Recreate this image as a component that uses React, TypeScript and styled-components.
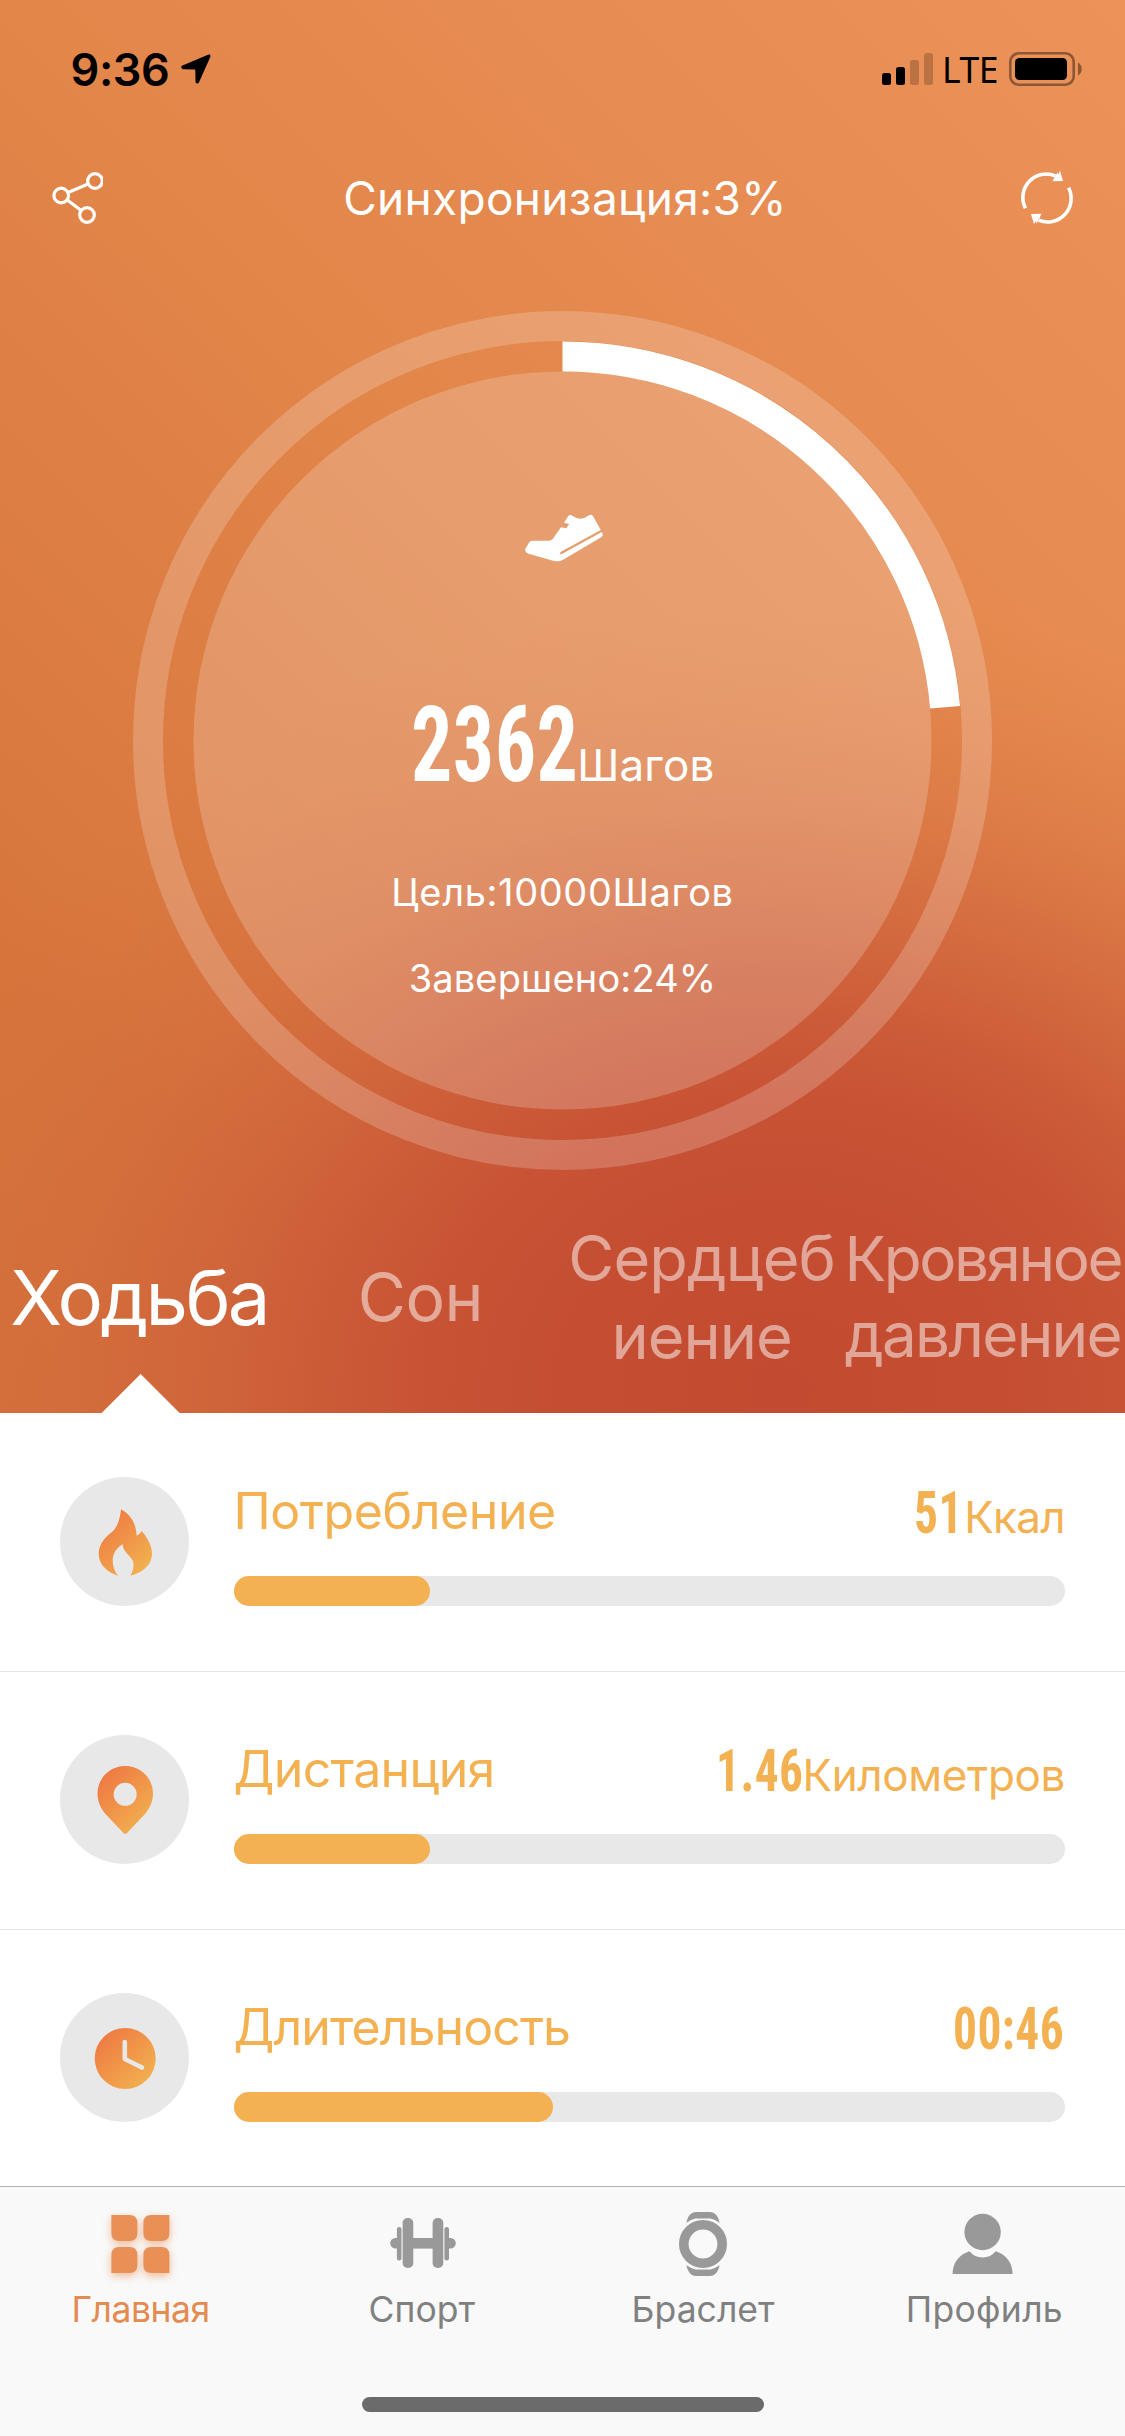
import React from "react";
import styled, { createGlobalStyle } from "styled-components";

const GlobalStyle = createGlobalStyle`
  * { box-sizing: border-box; }
  body { margin: 0; background: #fff; }
`;

const Screen = styled.main`
  display: flex;
  flex-direction: column;
  width: 1125px;
  height: 2436px;
  overflow: hidden;
  background: #fff;
  font-family: Inter, "Noto Sans", sans-serif;
`;

/* ---------- hero ---------- */

const Hero = styled.section`
  display: flex;
  flex-direction: column;
  flex: none;
  height: 1413px;
  color: #fff;
  background:
    radial-gradient(
      ellipse 950px 790px at 780px 1390px,
      #c24a30 0,
      #c44d32 20%,
      #c75234 36%,
      rgba(202, 88, 55, 0.9) 48%,
      rgba(205, 94, 57, 0.65) 61%,
      rgba(209, 100, 60, 0.34) 75%,
      rgba(212, 108, 62, 0.12) 89%,
      rgba(214, 112, 62, 0) 100%
    ),
    linear-gradient(45deg, #d4713b 0%, #d6743c 18%, #db7b41 30%, #e2864a 56%, #e68b51 73%, #ec9359 100%);
`;

const StatusBar = styled.header`
  display: flex;
  align-items: center;
  justify-content: space-between;
  height: 132px;
  padding: 6px 43px 0 70.5px;
  color: #000;
`;

const StatusSide = styled.div`
  display: flex;
  align-items: center;
`;

const Clock = styled.span`
  width: 110px;
  font-size: 45px;
  font-weight: 600;
  line-height: 45px;
  letter-spacing: -0.4px;
`;

const Network = styled.span`
  width: 67px;
  margin-left: 9px;
  font-family: "Noto Sans", sans-serif;
  font-size: 35.5px;
  line-height: 45px;
  letter-spacing: -0.4px;
`;

const NavBar = styled.nav`
  display: flex;
  align-items: center;
  height: 132px;
  padding: 0 50px 0 51px;
`;

const NavTitle = styled.h1`
  flex: 1;
  margin: 0;
  padding-left: 8px;
  font-size: 46px;
  font-weight: 400;
  line-height: 60px;
  letter-spacing: 0.3px;
  text-align: center;
`;

const Dial = styled.div`
  position: relative;
  display: flex;
  flex-direction: column;
  align-items: center;
  align-self: center;
  width: 859px;
  height: 859px;
  margin-top: 47px;
  padding-top: 203px;
`;

const DialRings = styled.svg`
  position: absolute;
  inset: 0;
`;

const DialContent = styled.div`
  position: relative;
  display: flex;
  flex-direction: column;
  align-items: center;
`;

const StepsLine = styled.div`
  display: flex;
  align-items: baseline;
  margin-top: 131px;
`;

const Condensed = styled.span<{ $size: number; $width: number; $squeeze: number }>`
  display: inline-block;
  width: ${(p) => p.$width}px;
  font-family: Roboto, sans-serif;
  font-size: ${(p) => p.$size}px;
  font-weight: 750;
  font-stretch: 75%;
  line-height: ${(p) => p.$size}px;
  letter-spacing: 0.6px;
  white-space: nowrap;
  transform: scaleX(${(p) => p.$squeeze});
  transform-origin: left center;
`;

const StepsUnit = styled.span`
  font-size: 44px;
  line-height: 44px;
  letter-spacing: 0.1px;
`;

const DialNote = styled.p<{ $top: number; $tracking: number }>`
  margin: ${(p) => p.$top}px 0 0;
  font-size: 38px;
  line-height: 40px;
  letter-spacing: ${(p) => p.$tracking}px;
`;

const MetricTabs = styled.div`
  display: grid;
  grid-template-columns: repeat(4, 1fr);
  height: 234px;
  margin-top: auto;
`;

const MetricTab = styled.div<{ $active?: boolean; $size: number; $line: number }>`
  position: relative;
  display: flex;
  flex-direction: column;
  align-items: center;
  justify-content: center;
  padding: 1px 3px 0 0;
  color: ${(p) => (p.$active ? "#fff" : "rgba(255, 255, 255, 0.5)")};
  font-size: ${(p) => p.$size}px;
  line-height: ${(p) => p.$line}px;
  white-space: nowrap;
`;

const TabLine = styled.span<{ $tracking: number }>`
  letter-spacing: ${(p) => p.$tracking}px;
`;

const ActivePointer = styled.i`
  position: absolute;
  bottom: 0;
  left: 50%;
  width: 78px;
  height: 39px;
  margin-left: -39px;
  background: #fff;
  clip-path: polygon(50% 0, 100% 100%, 0 100%);
`;

/* ---------- metrics ---------- */

const MetricList = styled.section`
  flex: none;
  height: 773px;
  overflow: hidden;
`;

const MetricRow = styled.article`
  display: flex;
  height: 258px;
  padding: 64px 60px 0;

  & + & {
    padding-top: 63px;
    border-top: 1px solid #e6e6e6;
  }
`;

const Badge = styled.div`
  flex: none;
  width: 129px;
  height: 129px;
  border-radius: 50%;
  background: #e8e8e8;
`;

const MetricBody = styled.div`
  flex: 1;
  margin-left: 45px;
  color: #f3b152;
`;

const MetricHead = styled.div`
  display: flex;
  justify-content: space-between;
  align-items: flex-start;
  height: 99px;
`;

const MetricName = styled.h2<{ $tracking: number }>`
  margin: 9px 0 0 -0.5px;
  font-size: 50px;
  font-weight: 400;
  line-height: 50px;
  letter-spacing: ${(p) => p.$tracking}px;
`;

const MetricValue = styled.div`
  display: flex;
  align-items: baseline;
  margin-top: 6px;
`;

const MetricUnit = styled.span<{ $tracking: number }>`
  font-size: 44px;
  line-height: 44px;
  letter-spacing: ${(p) => p.$tracking}px;
`;

const Track = styled.div`
  height: 30px;
  border-radius: 15px;
  background: #e8e8e8;
`;

const Fill = styled.div`
  height: 100%;
  border-radius: 15px;
  background: #f3b152;
`;

/* ---------- bottom bar ---------- */

const BottomBar = styled.footer`
  display: flex;
  flex: 1;
  flex-direction: column;
  align-items: center;
  border-top: 1px solid #b2b2b2;
  background: #f9f9f9;
`;

const BottomTabs = styled.div`
  display: grid;
  grid-template-columns: repeat(4, 1fr);
  width: 100%;
  padding-top: 22px;
`;

const BottomTab = styled.div<{ $active?: boolean; $tracking: number }>`
  display: flex;
  flex-direction: column;
  align-items: center;
  gap: 11px;
  color: ${(p) => (p.$active ? "#e38b50" : "#808080")};
  font-size: 35.5px;
  line-height: 40px;
  letter-spacing: ${(p) => p.$tracking}px;
`;

const TabIcon = styled.svg`
  width: 70px;
  height: 70px;
  overflow: visible;
`;

const GlowIcon = styled(TabIcon)`
  filter: drop-shadow(0 3px 4px rgba(232, 144, 86, 0.6));
`;

const HomeIndicator = styled.div`
  width: 402px;
  height: 15px;
  margin-top: 67px;
  border-radius: 8px;
  background: #6b6b6b;
`;

/* ---------- drawings ---------- */

const WarmGradient = ({ id }: { id: string }) => (
  <defs>
    <linearGradient id={id} gradientUnits="userSpaceOnUse" x1="42" y1="42" x2="88" y2="88">
      <stop offset="0" stopColor="#ee7a43" />
      <stop offset="1" stopColor="#f2b04f" />
    </linearGradient>
  </defs>
);

const FlameIcon = () => (
  <svg width="129" height="129" viewBox="0 0 129 129">
    <WarmGradient id="flame" />
    <path
      fill="url(#flame)"
      d="M61 32.3C70 37 76.3 46 76.6 58.7C79 57.8 80.8 56 81.6 54C87.5 60.5 92 68.5 92 77C92 87.500 83 95.500 70.500 98.700C73.300 94 74 89 73.200 84.700C72 79.500 62.500 75 62.800 67.300C56.500 70.500 52.700 77 52.700 83.500C52.700 89.500 54.500 94.500 58.200 98.700C47.500 95.500 38.700 87.500 38.700 77C38.700 66.500 46 59.500 52.500 54.500C58.500 49 60.500 38.500 61 32.300Z"
    />
  </svg>
);

const PinIcon = () => (
  <svg width="129" height="129" viewBox="0 0 129 129">
    <WarmGradient id="pin" />
    <path
      fill="url(#pin)"
      fillRule="evenodd"
      d="M65.200 31C80.700 31 93 43.300 93 58.500C93 66 90 73 85.500 78.500L67 98C66 99.200 64.500 99.200 63.500 98L45 78.500C40.500 73 37.500 66 37.500 58.500C37.500 43.300 49.800 31 65.200 31ZM65.200 47.800A11.500 11.500 0 1 0 65.200 70.800A11.500 11.500 0 1 0 65.200 47.800Z"
    />
  </svg>
);

const ClockIcon = () => (
  <svg width="129" height="129" viewBox="0 0 129 129">
    <WarmGradient id="clock" />
    <circle cx="65.200" cy="65.500" r="30.500" fill="url(#clock)" />
    <path d="M64.800 49V66L82 74.500" fill="none" stroke="#e8e8e8" strokeWidth="4.600" strokeLinecap="round" strokeLinejoin="round" />
  </svg>
);

const ShareIcon = () => (
  <svg width="52" height="52" viewBox="0 0 52 52" fill="none" stroke="#fff" strokeWidth="3.200">
    <circle cx="10.200" cy="23.500" r="7.300" />
    <circle cx="44" cy="9" r="7.300" />
    <circle cx="36" cy="43" r="7.300" />
    <path d="M17.100 20.500L37.100 12M16.300 28L29.900 38.200" />
  </svg>
);

const SyncIcon = () => (
  <svg width="56" height="56" viewBox="0 0 56 56" fill="none" stroke="#fff" strokeWidth="3.600">
    <path d="M6.400 38.200A23.500 23.500 0 0 1 36.500 5.900" />
    <path d="M49.600 17.800A23.500 23.500 0 0 1 19.500 50.100" />
    <path d="M41 0.700L44 11L33 11.300L37.600 8Z" fill="#fff" stroke="none" />
    <path d="M15 54.300L12 44L23 43.700L18.400 48Z" fill="#fff" stroke="none" />
    <path d="M38.500 2.500L41.500 10H34Z M17.500 53.500L14.500 45H22Z" fill="#fff" stroke="none" />
  </svg>
);

const LocationArrow = () => (
  <svg width="30" height="30" viewBox="0 0 30 30">
    <path
      d="M1.500 11.500L27 0.700C28.700 0 30 1.300 29.300 3L18 28.200C17.100 30.100 14.500 29.600 14.500 27.500L14.300 16.300C14.300 15.700 14.100 15.500 13.500 15.500L2.300 15.300C0.100 15.200 -0.500 12.400 1.500 11.500Z"
      fill="#000"
    />
  </svg>
);

const SignalBars = () => (
  <svg width="51" height="32" viewBox="0 0 51 32">
    <rect x="0" y="20" width="9" height="12" rx="2.500" />
    <rect x="14" y="14" width="9" height="18" rx="2.500" />
    <rect x="28" y="7" width="9" height="25" rx="2.500" opacity="0.200" />
    <rect x="42" y="0" width="9" height="32" rx="2.500" opacity="0.200" />
  </svg>
);

const Battery = () => (
  <svg width="73" height="34" viewBox="0 0 73 34">
    <rect x="1.300" y="1.300" width="63.400" height="31.400" rx="8.500" fill="none" stroke="#000" strokeWidth="2.600" opacity="0.400" />
    <rect x="6" y="6" width="52" height="22" rx="4.500" />
    <path d="M69 10.500C74 13 74 21 69 23.500Z" opacity="0.400" />
  </svg>
);

const ShoeIcon = () => (
  <svg width="78" height="48" viewBox="-1 0 78 46" preserveAspectRatio="none" overflow="visible">
    <path
      fill="#fff"
      d="M4 27.500Q5 25.700 7.500 25.700H24Q26.300 25.700 27.700 24L36 12.700L41.300 13.700L44.200 9.600L39 8.300L43 2.500Q44.500 0.300 46.800 1.500Q55.500 7.500 63.800 1.500Q66.300 -0.500 68 2L75.800 15.300L36.300 35.900Q34.200 37.200 35.300 38.400Q36 39 37.800 37.900L76.800 17.200Q78.800 20.200 76.500 22L38.500 43.500Q34 46.200 29 45L3.500 38Q-1.200 36.200 0.500 33Z"
    />
  </svg>
);

const HomeTabIcon = () => (
  <GlowIcon viewBox="0 0 70 70" fill="#e89056">
    <path d="M5.400 6H23.400Q31.400 6 31.400 14V24Q31.400 32 23.400 32H13.400Q5.400 32 5.400 24Z" />
    <path d="M63.400 6V24Q63.400 32 55.400 32H45.400Q37.400 32 37.400 24V14Q37.400 6 45.400 6Z" />
    <path d="M5.400 64V46Q5.400 38 13.400 38H23.400Q31.400 38 31.400 46V56Q31.400 64 23.400 64Z" />
    <path d="M63.400 64H45.400Q37.400 64 37.400 56V46Q37.400 38 45.400 38H55.400Q63.400 38 63.400 46Z" />
  </GlowIcon>
);

const DumbbellIcon = () => (
  <TabIcon viewBox="0 0 70 70" fill="#999">
    <rect x="15.600" y="9" width="10.700" height="50" rx="5" />
    <rect x="45.600" y="9" width="10.700" height="50" rx="5" />
    <rect x="9.900" y="18" width="4.600" height="33.500" rx="2.300" />
    <rect x="57.400" y="18" width="4.600" height="33.500" rx="2.300" />
    <rect x="24" y="29" width="24" height="10.600" />
    <path d="M10.500 29H8.500A5 5 0 0 0 8.500 39.600H10.500ZM61.500 29H63.500A5 5 0 0 1 63.500 39.600H61.500Z" />
  </TabIcon>
);

const WatchIcon = () => (
  <TabIcon viewBox="0 0 70 70" fill="#999">
    <circle cx="35" cy="35" r="19.200" fill="none" stroke="#999" strokeWidth="9.600" />
    <path d="M18.400 13.700C19.500 7.500 23 3 28 3H42C47 3 50.500 7.500 51.600 13.700Q47 10.500 42.500 9.500H27.500Q23 10.500 18.400 13.700Z" />
    <path d="M18.400 56.300C19.500 62.500 23 67 28 67H42C47 67 50.500 62.500 51.600 56.300Q47 59.500 42.500 60.500H27.500Q23 59.500 18.400 56.300Z" />
  </TabIcon>
);

const PersonIcon = () => (
  <TabIcon viewBox="0 0 70 70" fill="#999">
    <circle cx="33.600" cy="23" r="18.200" />
    <path d="M3.600 65C3.600 54 10 45.500 20.500 42.300Q25.500 48.500 33.600 48.500T46.700 42.300C57.200 45.500 63.600 54 63.600 65Z" />
  </TabIcon>
);

/* ---------- screen ---------- */

const steps = 2362;
const goal = 10000;
const angle = (steps / goal) * Math.PI * 2;
const center = 429.5;
const arcRadius = 384;
const arcEnd = `${center + arcRadius * Math.sin(angle)} ${center - arcRadius * Math.cos(angle)}`;

const metrics = [
  { name: "Потребление", tracking: -0.41, value: "51", width: 49.7, unit: "Ккал", unitTracking: -0.64, share: 0.2362, Icon: FlameIcon },
  { name: "Дистанция", tracking: -0.68, value: "1.46", width: 86.3, unit: "Километров", unitTracking: -0.37, share: 0.2362, Icon: PinIcon },
  { name: "Длительность", tracking: -0.93, value: "00:46", width: 112.5, unit: "", unitTracking: 0, share: 0.3833, Icon: ClockIcon },
];

export default function App() {
  return (
    <Screen>
      <GlobalStyle />
      <Hero>
        <StatusBar>
          <StatusSide>
            <Clock>9:36</Clock>
            <LocationArrow />
          </StatusSide>
          <StatusSide>
            <SignalBars />
            <Network>LTE</Network>
            <Battery />
          </StatusSide>
        </StatusBar>
        <NavBar>
          <ShareIcon />
          <NavTitle>Синхронизация:3%</NavTitle>
          <SyncIcon />
        </NavBar>
        <Dial>
          <DialRings viewBox="0 0 859 859" fill="none">
            <circle cx={center} cy={center} r="414.500" stroke="#fff" strokeOpacity="0.200" strokeWidth="30" />
            <circle cx={center} cy={center} r="369" fill="#fff" fillOpacity="0.200" />
            <path d={`M${center} ${center - arcRadius}A${arcRadius} ${arcRadius} 0 0 1 ${arcEnd}`} stroke="#fff" strokeWidth="30" />
          </DialRings>
          <DialContent>
            <ShoeIcon />
            <StepsLine>
              <Condensed $size={105} $width={166.7} $squeeze={0.78}>{steps}</Condensed>
              <StepsUnit>Шагов</StepsUnit>
            </StepsLine>
            <DialNote $top={74} $tracking={0.63}>Цель:{goal}Шагов</DialNote>
            <DialNote $top={46} $tracking={0.15}>Завершено:24%</DialNote>
          </DialContent>
        </Dial>
        <MetricTabs>
          <MetricTab $active $size={76} $line={80}>
            <TabLine $tracking={-2.59}>Ходьба</TabLine>
            <ActivePointer />
          </MetricTab>
          <MetricTab $size={66} $line={80}>
            <TabLine $tracking={-0.54}>Сон</TabLine>
          </MetricTab>
          <MetricTab $size={63} $line={78}>
            <TabLine $tracking={-0.81}>Сердцеб</TabLine>
            <TabLine $tracking={-1.02}>иение</TabLine>
          </MetricTab>
          <MetricTab $size={62} $line={76}>
            <TabLine $tracking={-2.45}>Кровяное</TabLine>
            <TabLine $tracking={-1.74}>давление</TabLine>
          </MetricTab>
        </MetricTabs>
      </Hero>
      <MetricList>
        {metrics.map(({ name, tracking, value, width, unit, unitTracking, share, Icon }) => (
          <MetricRow key={name}>
            <Badge>
              <Icon />
            </Badge>
            <MetricBody>
              <MetricHead>
                <MetricName $tracking={tracking}>{name}</MetricName>
                <MetricValue>
                  <Condensed $size={60} $width={width} $squeeze={0.79}>{value}</Condensed>
                  {unit && <MetricUnit $tracking={unitTracking}>{unit}</MetricUnit>}
                </MetricValue>
              </MetricHead>
              <Track>
                <Fill style={{ width: `${share * 100}%` }} />
              </Track>
            </MetricBody>
          </MetricRow>
        ))}
      </MetricList>
      <BottomBar>
        <BottomTabs>
          <BottomTab $active $tracking={-0.48}>
            <HomeTabIcon />
            Главная
          </BottomTab>
          <BottomTab $tracking={0.04}>
            <DumbbellIcon />
            Спорт
          </BottomTab>
          <BottomTab $tracking={0.03}>
            <WatchIcon />
            Браслет
          </BottomTab>
          <BottomTab $tracking={0.3}>
            <PersonIcon />
            Профиль
          </BottomTab>
        </BottomTabs>
        <HomeIndicator />
      </BottomBar>
    </Screen>
  );
}
